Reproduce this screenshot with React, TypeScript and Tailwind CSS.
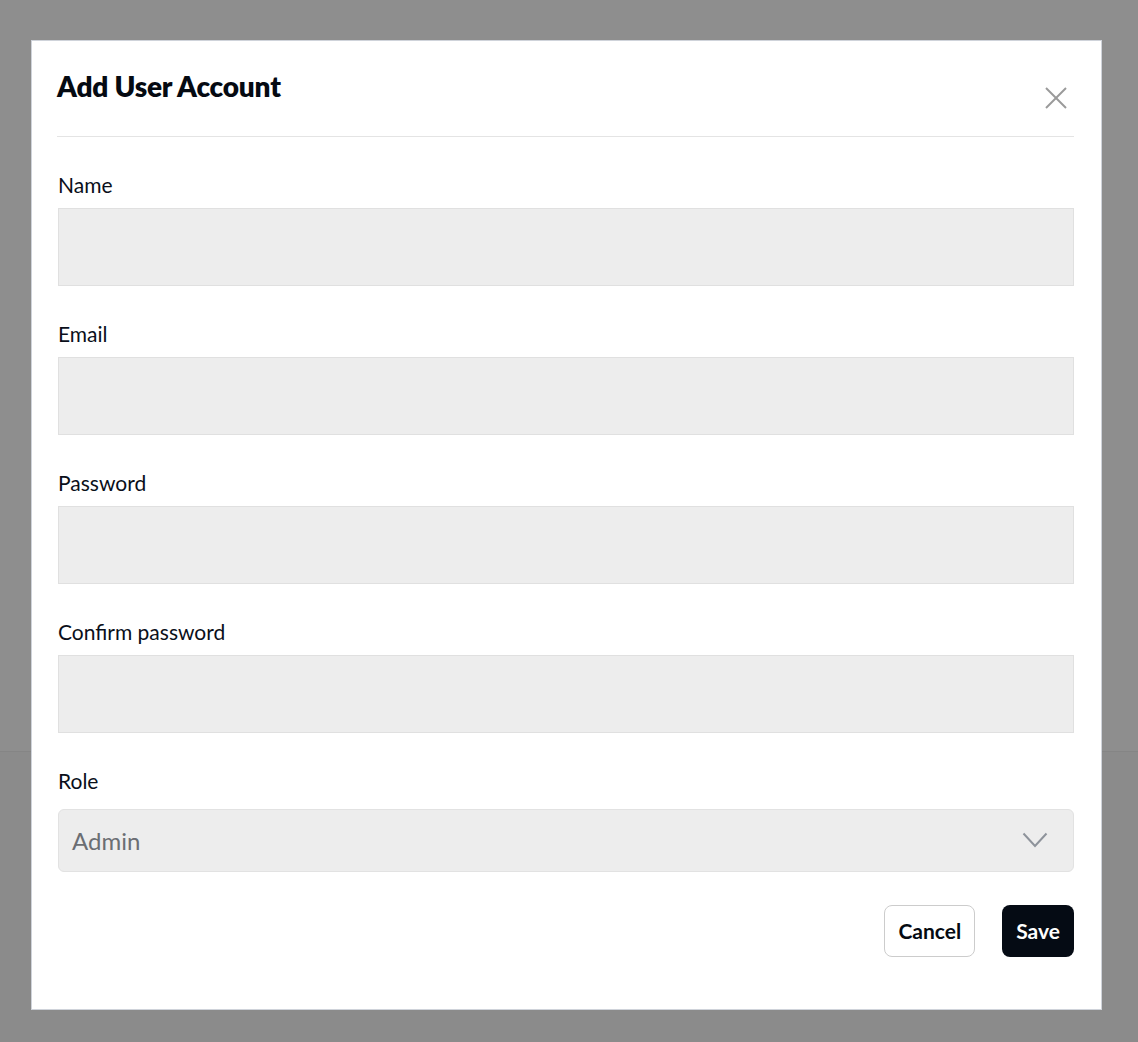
import React from "react";

const fields = ["Name", "Email", "Password", "Confirm password"];

export default function App() {
  return (
    <div
      className="relative w-full h-[1042px] overflow-hidden"
      style={{ fontFamily: "Lato, 'Noto Sans', sans-serif" }}
    >
      {/* dimmed page behind */}
      <div className="flex flex-col h-full">
        <div className="h-[752px] bg-[#8e8e8e] border-b border-[#858585]" />
        <div className="flex-1 bg-[#8b8b8b]" />
      </div>

      {/* modal */}
      <div className="absolute left-[31px] top-[40px] w-[1071px] h-[970px] bg-white border border-[#cfd3da] pl-[25px] pr-[27px] pt-[29px] flex flex-col">
        <div className="flex items-start justify-between border-b border-[#e4e4e4] pb-[27px]">
          <h2 className="text-[28px] leading-[32px] font-extrabold text-[#050a12] tracking-[-0.2px]">
            Add User Account
          </h2>
          <svg
            className="mt-[17px] mr-[7px]"
            width="22"
            height="22"
            viewBox="0 0 22 22"
            fill="none"
            stroke="#9a9a9a"
            strokeWidth="2"
          >
            <line x1="1" y1="1" x2="21" y2="21" />
            <line x1="21" y1="1" x2="1" y2="21" />
          </svg>
        </div>

        <div className="flex flex-col pt-[35px] pl-px">
          {fields.map((f) => (
            <div key={f} className="flex flex-col mb-[35px]">
              <label className="text-[21px] leading-[25px] text-[#0a0f1a]">{f}</label>
              <div className="mt-[11px] h-[78px] bg-[#ededed] border border-[#e0e0e0]" />
            </div>
          ))}
          <div className="flex flex-col">
            <label className="text-[21px] leading-[25px] text-[#0a0f1a]">Role</label>
            <div className="mt-[16px] h-[63px] bg-[#ededed] border border-[#e2e2e2] rounded-[6px] flex items-center justify-between pl-[13px] pr-[25px]">
              <span className="text-[24px] text-[#6b6e73]">Admin</span>
              <svg width="26" height="17" viewBox="0 0 26 17" fill="none" stroke="#8e939b" strokeWidth="2">
                <polyline points="1.5,1.5 13,14 24.5,1.5" />
              </svg>
            </div>
          </div>
        </div>

        <div className="flex justify-end gap-[27px] mt-[33px]">
          <button className="h-[52px] px-[13px] rounded-[8px] border border-[#cccccc] bg-white text-[21px] font-bold text-[#050a12]">
            Cancel
          </button>
          <button className="h-[52px] px-[14px] rounded-[8px] bg-[#050b14] text-[21px] font-bold text-white">
            Save
          </button>
        </div>
      </div>
    </div>
  );
}
